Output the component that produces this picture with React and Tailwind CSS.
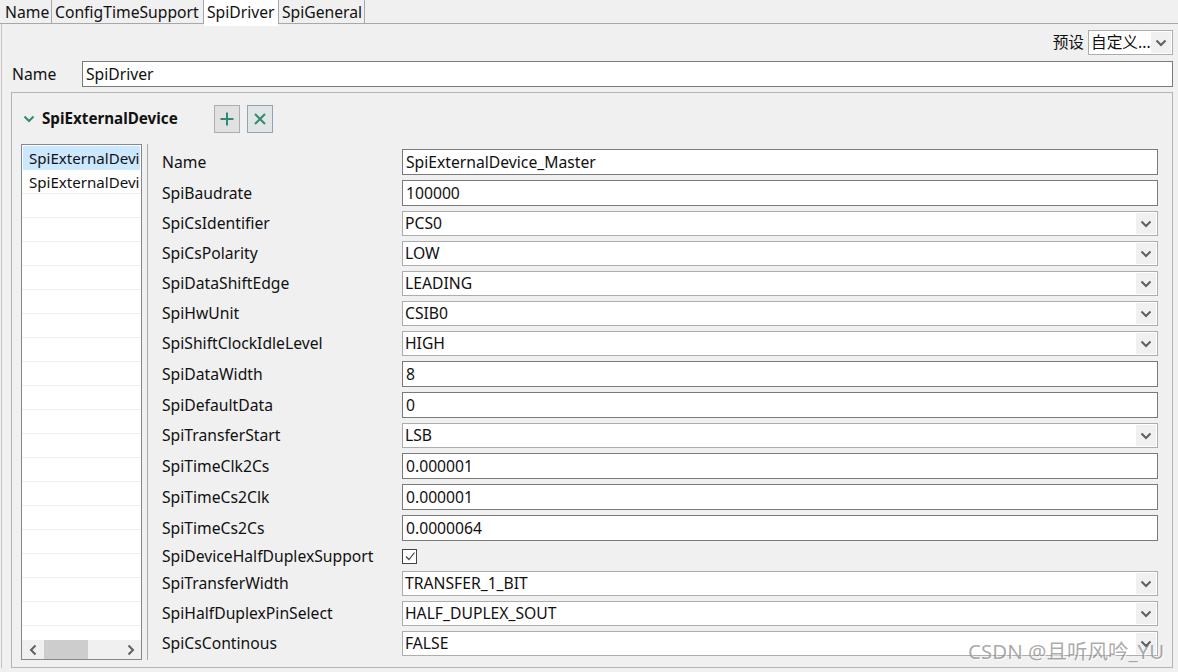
const Chevron = ({ className = "" }) => (
  <svg viewBox="0 0 12 8" className={`h-2 w-3 ${className}`} fill="none" stroke="currentColor" strokeWidth="2">
    <path d="M1.5 1.5 6 6l4.5-4.5" />
  </svg>
);

const TextField = ({ value }) => (
  <div className="flex h-[26px] items-center border border-[#7a7a7a] bg-white pl-[3px] pt-[2px] leading-none">
    {value}
  </div>
);

const SelectField = ({ value }) => (
  <div className="flex h-[25px] items-center justify-between border border-[#adadad] bg-white pl-[2px] pr-px leading-none">
    <span>{value}</span>
    <span className="flex h-[21px] w-[20px] items-center justify-center bg-[#f0f0f0] text-[#5f5f5f]">
      <Chevron />
    </span>
  </div>
);

const fields = [
  ["Name", "text", "SpiExternalDevice_Master"],
  ["SpiBaudrate", "text", "100000"],
  ["SpiCsIdentifier", "select", "PCS0"],
  ["SpiCsPolarity", "select", "LOW"],
  ["SpiDataShiftEdge", "select", "LEADING"],
  ["SpiHwUnit", "select", "CSIB0"],
  ["SpiShiftClockIdleLevel", "select", "HIGH"],
  ["SpiDataWidth", "text", "8"],
  ["SpiDefaultData", "text", "0"],
  ["SpiTransferStart", "select", "LSB"],
  ["SpiTimeClk2Cs", "text", "0.000001"],
  ["SpiTimeCs2Clk", "text", "0.000001"],
  ["SpiTimeCs2Cs", "text", "0.0000064"],
  ["SpiDeviceHalfDuplexSupport", "check", ""],
  ["SpiTransferWidth", "select", "TRANSFER_1_BIT"],
  ["SpiHalfDuplexPinSelect", "select", "HALF_DUPLEX_SOUT"],
  ["SpiCsContinous", "select", "FALSE"],
];

const App = () => {
  return (
    <div
      className="relative h-[672px] w-[1178px] overflow-hidden bg-[#f0f0f0] text-[15.7px] text-[#111]"
      style={{ fontFamily: '"Noto Sans", "Noto Sans CJK SC", sans-serif' }}
    >
      {/* tabs */}
      <div className="flex h-[24px] items-start border-b border-[#a8a8a8]">
        <div className="flex h-[23px] w-[52px] items-center border-r border-[#a8a8a8] pl-[5px] pt-[2px]">Name</div>
        <div className="flex h-[23px] w-[152px] items-center border-r border-[#a8a8a8] pl-[3px] pt-[2px]">ConfigTimeSupport</div>
        <div className="z-10 flex h-[26px] w-[74px] items-center bg-white pb-px pl-[3px]">SpiDriver</div>
        <div className="flex h-[23px] w-[87px] items-center border-x border-[#a8a8a8] pl-[3px] pt-[2px]">SpiGeneral</div>
      </div>

      <div className="ml-px border-l border-[#c4c4c4] pl-[9px] pr-[5px]">
        {/* preset */}
        <div className="flex h-[32px] items-end justify-end gap-[4px] pb-[1px]">
          <span>预设</span>
          <div className="flex h-[25px] w-[85px] items-center justify-between border border-[#adadad] bg-white pl-[2px] pr-px leading-none">
            <span className="pt-px">自定义...</span>
            <span className="flex h-[21px] w-[20px] items-center justify-center bg-[#f0f0f0] text-[#5f5f5f]">
              <Chevron />
            </span>
          </div>
        </div>

        {/* name */}
        <div className="mt-[5px] flex h-[26px] items-center">
          <span className="w-[71px] pl-px pt-[2px]">Name</span>
          <div className="flex h-[26px] flex-1 items-center border border-[#7a7a7a] bg-white pl-[3px] pt-[2px] leading-none">SpiDriver</div>
        </div>

        {/* section */}
        <div className="mt-[5px] h-[576px] border border-[#b4b4b4] pl-[9px] pr-[14px] pt-[12px]">
          <div className="flex h-[28px] items-center">
            <Chevron className="ml-[2px] text-[#2e8b73]" />
            <span className="ml-[7px] w-[172px] pb-[2px] text-[15.2px] font-bold">SpiExternalDevice</span>
            <button className="flex h-[28px] w-[26px] items-center justify-center border border-[#adadad] bg-[#e1e1e1]">
              <svg viewBox="0 0 16 16" className="h-4 w-4" stroke="#2e8b73" strokeWidth="2">
                <path d="M8 1.5v13M1.5 8h13" />
              </svg>
            </button>
            <button className="ml-[7px] flex h-[28px] w-[26px] items-center justify-center border border-[#8fa6b2] bg-[#e1e5e6]">
              <svg viewBox="0 0 16 16" className="h-4 w-4" stroke="#2e8b73" strokeWidth="2">
                <path d="M3 3l10 10M13 3 3 13" />
              </svg>
            </button>
          </div>

          <div className="mt-[11px] flex">
            {/* list */}
            <div className="flex h-[516px] w-[121px] flex-col border border-[#828790] bg-white">
              <div className="flex-1 overflow-hidden pt-px text-[15.1px]">
                <div className="mx-px flex h-[24px] items-center whitespace-nowrap bg-[#cce8ff] pl-[6px]">SpiExternalDevi</div>
                <div className="flex h-[24px] items-center whitespace-nowrap border-b border-[#eeeeee] pl-[7px] pt-px">SpiExternalDevi</div>
                {Array.from({ length: 19 }, (_, i) => (
                  <div key={i} className="h-[24px] border-b border-[#eeeeee]" />
                ))}
              </div>
              <div className="flex h-[19px] items-center bg-[#f0f0f0] text-[#5f5f5f]">
                <span className="flex w-[22px] justify-center">
                  <Chevron className="rotate-90" />
                </span>
                <span className="h-full w-[44px] bg-[#cdcdcd]" />
                <span className="ml-auto flex w-[21px] justify-center">
                  <Chevron className="-rotate-90" />
                </span>
              </div>
            </div>

            <div className="ml-[5px] h-[516px] border-l border-[#a8a8a8]" />

            {/* form */}
            <div className="ml-[14px] flex flex-1 flex-col gap-[5px] pt-[5px]">
              {fields.map(([label, kind, value]) => (
                <div key={label} className="flex items-center">
                  <span className={`w-[240px] shrink-0 leading-none ${kind === "select" ? "" : "pt-[2px]"}`}>{label}</span>
                  <div className="flex-1">
                    {kind === "text" && <TextField value={value} />}
                    {kind === "select" && <SelectField value={value} />}
                    {kind === "check" && (
                      <div className="flex h-[20px] items-center">
                        <span className="flex h-[15px] w-[15px] items-center justify-center border border-[#444] bg-white">
                          <svg viewBox="0 0 12 12" className="h-3 w-3" fill="none" stroke="#444" strokeWidth="1.2">
                            <path d="M2 6.5 5 9.5 10.5 2.5" />
                          </svg>
                        </span>
                      </div>
                    )}
                  </div>
                </div>
              ))}
            </div>
          </div>
        </div>
      </div>

      {/* watermark */}
      <div className="absolute left-[968px] top-[636px] text-[20.5px] text-[#70707099] [text-shadow:1px_1px_1px_#ffffffcc]">
        CSDN @且听风吟_YU
      </div>
    </div>
  );
};

export default App;
